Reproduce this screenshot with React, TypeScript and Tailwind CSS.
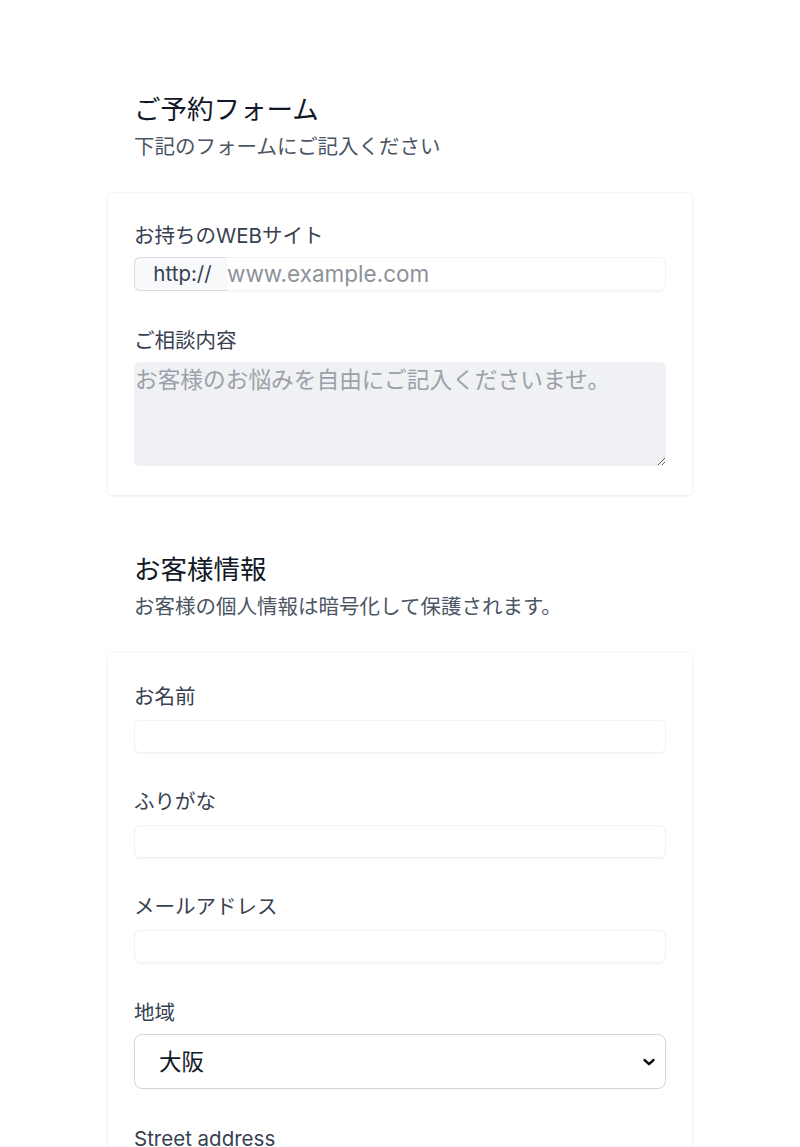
import React from "react";

function Label({ children }: { children: React.ReactNode }) {
  return <label className="block text-[20.5px] leading-[28px] text-[#374151]">{children}</label>;
}

function TextInput({ mt = "mt-[9px]" }: { mt?: string }) {
  return (
    <input
      type="text"
      className={`${mt} block w-full h-[33px] rounded-[6px] border border-[#f1f2f4] bg-white px-3 text-[22.5px] shadow-[0_1px_2px_rgba(0,0,0,0.04)] outline-none`}
    />
  );
}

export default function App() {
  return (
    <div className="min-h-screen bg-white font-[Inter,'Noto_Sans_CJK_JP',sans-serif] text-[#111827]">
      <div className="mx-auto w-[584px] pt-[93px] pb-20">
        <div className="px-[26px]">
          <h2 className="text-[26.5px] leading-[32px] text-[#111827]">ご予約フォーム</h2>
          <p className="mt-[8px] text-[20.5px] leading-[28px] text-[#4b5563]">下記のフォームにご記入ください</p>
        </div>

        <div className="mt-[32px] rounded-[4px] bg-white px-[26px] pt-[29px] pb-[29px] shadow-[0_0_3px_rgba(0,0,0,0.07),0_1px_3px_rgba(0,0,0,0.06)]">
          <Label>お持ちのWEBサイト</Label>
          <div className="mt-[7px] flex h-[34px]">
            <span className="flex w-[93px] shrink-0 items-center justify-center rounded-l-[6px] border border-r-0 border-[#d9dbe0] bg-[#f8f9fa] pl-[3px] text-[20.5px] text-[#374151]">
              http://
            </span>
            <input
              type="text"
              placeholder="www.example.com"
              className="block min-w-0 flex-1 rounded-r-[6px] border border-l-0 border-[#f1f2f4] bg-white px-0 text-[22.5px] text-[#111827] shadow-[0_1px_2px_rgba(0,0,0,0.04)] outline-none placeholder:text-[#8d929a]"
            />
          </div>

          <div className="mt-[36px]">
            <Label>ご相談内容</Label>
          </div>
          <textarea
            placeholder="お客様のお悩みを自由にご記入くださいませ。"
            className="mt-[7px] block h-[104px] w-full rounded-[6px] border-0 bg-[#f0f1f5] px-[1px] pt-[2px] text-[22.7px] leading-[32px] outline-none placeholder:text-[#9ca1a9]"
          />
        </div>

        <div className="mt-[58px] px-[26px]">
          <h2 className="text-[26.5px] leading-[32px] text-[#111827]">お客様情報</h2>
          <p className="mt-[8px] text-[20.5px] leading-[28px] text-[#4b5563]">お客様の個人情報は暗号化して保護されます。</p>
        </div>

        <div className="mt-[32px] rounded-[4px] bg-white px-[26px] pt-[30px] pb-[29px] shadow-[0_0_3px_rgba(0,0,0,0.07),0_1px_3px_rgba(0,0,0,0.06)]">
          <Label>お名前</Label>
          <TextInput />

          <div className="mt-[35px]">
            <Label>ふりがな</Label>
          </div>
          <TextInput />

          <div className="mt-[35px]">
            <Label>メールアドレス</Label>
          </div>
          <TextInput />

          <div className="mt-[36px]">
            <Label>地域</Label>
          </div>
          <div className="relative mt-[7px]">
            <select
              defaultValue="大阪"
              className="block h-[55px] w-full appearance-none rounded-[8px] border border-[#d1d5db] bg-white pl-[24px] text-[22.5px] text-[#111827] outline-none"
            >
              <option>大阪</option>
              <option>東京</option>
              <option>京都</option>
            </select>
            <svg
              className="pointer-events-none absolute right-[10px] top-1/2 -translate-y-1/2"
              width="14"
              height="10"
              viewBox="0 0 14 10"
              fill="none"
            >
              <path d="M2.5 3 L7 7.2 L11.5 3" stroke="#111" strokeWidth="2.4" strokeLinecap="round" strokeLinejoin="round" />
            </svg>
          </div>

          <div className="mt-[36px]">
            <Label>Street address</Label>
          </div>
          <TextInput />
        </div>
      </div>
    </div>
  );
}
